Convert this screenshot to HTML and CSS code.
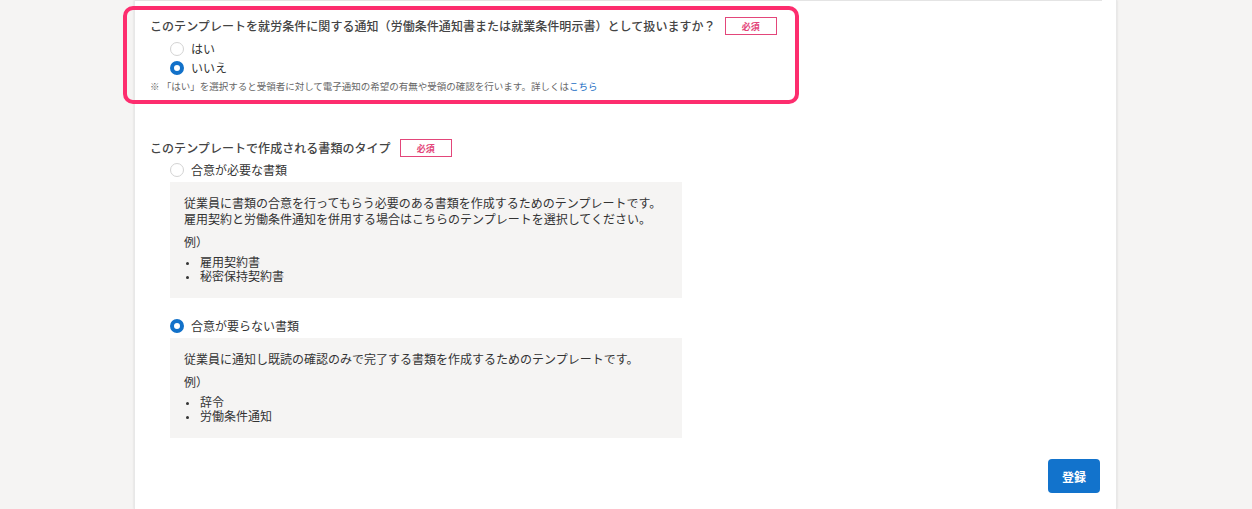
FILE: index.html
```html
<!DOCTYPE html>
<html lang="ja">
<head>
<meta charset="utf-8">
<link rel="stylesheet" href="styles.css">
</head>
<body>
<div class="page">
  <div class="card">
    <div class="topline"></div>
    <section class="field field-first">
      <div class="question">
        <span class="q-text">このテンプレートを就労条件に関する通知（労働条件通知書または就業条件明示書）として扱いますか？</span>
        <span class="badge">必須</span>
      </div>
      <div class="options">
        <label class="radio-row"><span class="radio"></span><span class="radio-label">はい</span></label>
        <label class="radio-row"><span class="radio checked"></span><span class="radio-label">いいえ</span></label>
      </div>
      <p class="note">※ 「はい」を選択すると受領者に対して電子通知の希望の有無や受領の確認を行います。詳しくは<a class="link">こちら</a></p>
      <div class="highlight"></div>
    </section>

    <section class="field field-second">
      <div class="question">
        <span class="q-text">このテンプレートで作成される書類のタイプ</span>
        <span class="badge">必須</span>
      </div>
      <div class="choice">
        <label class="radio-row"><span class="radio"></span><span class="radio-label">合意が必要な書類</span></label>
        <div class="desc">
          <p class="desc-text">従業員に書類の合意を行ってもらう必要のある書類を作成するためのテンプレートです。<br>雇用契約と労働条件通知を併用する場合はこちらのテンプレートを選択してください。</p>
          <p class="desc-ex">例）</p>
          <ul class="desc-list">
            <li>雇用契約書</li>
            <li>秘密保持契約書</li>
          </ul>
        </div>
      </div>
      <div class="choice choice-second">
        <label class="radio-row"><span class="radio checked"></span><span class="radio-label">合意が要らない書類</span></label>
        <div class="desc">
          <p class="desc-text">従業員に通知し既読の確認のみで完了する書類を作成するためのテンプレートです。</p>
          <p class="desc-ex">例）</p>
          <ul class="desc-list">
            <li>辞令</li>
            <li>労働条件通知</li>
          </ul>
        </div>
      </div>
    </section>

    <div class="actions">
      <button class="btn-primary">登録</button>
    </div>
  </div>
</div>
</body>
</html>
```

FILE: styles.css
```css
* { box-sizing: border-box; }
html, body { margin: 0; padding: 0; }
body {
  background: #f5f4f3;
  font-family: "Noto Sans CJK JP", "Noto Sans", sans-serif;
  color: #333;
  width: 1252px;
  height: 509px;
  overflow: hidden;
}
.page {
  padding-left: 134px;
  height: 509px;
}
.card {
  width: 983px;
  height: 509px;
  background: #fff;
  box-shadow: 0 0 2px rgba(0,0,0,0.12);
  border-left: 1px solid #e8e8e8;
  border-right: 1px solid #e8e8e8;
}
.topline {
  height: 1px;
  margin-right: 14px;
  background: #e4e4e4;
}
.field {
  position: relative;
  padding-left: 15px;
}
.field-first { padding-top: 16px; }
.field-second { padding-top: 46px; }
.question {
  display: flex;
  align-items: center;
  height: 18px;
}
.q-text {
  font-size: 12px;
  line-height: 18px;
  font-weight: 500;
  color: #444;
  letter-spacing: 0.05px;
}
.badge {
  margin-left: 9px;
  width: 52px;
  height: 18px;
  border: 1px solid #e3467a;
  color: #e3467a;
  font-size: 9px;
  font-weight: 700;
  display: flex;
  align-items: center;
  justify-content: center;
}
.options { margin-top: 4px; }
.radio-row {
  display: flex;
  align-items: center;
  height: 19px;
  padding-left: 20px;
}
.radio {
  width: 14px;
  height: 14px;
  border-radius: 50%;
  border: 1px solid #d3d3d3;
  background: #fff;
  flex: none;
}
.radio.checked {
  border: 4px solid #1271c9;
}
.radio-label {
  margin-left: 7px;
  font-size: 12px;
  color: #333;
  line-height: 19px;
}
.note {
  margin: 2px 0 0;
  font-size: 9.5px;
  line-height: 14px;
  color: #666;
}
.link { color: #1a6ec4; }
.highlight {
  position: absolute;
  left: -12px;
  top: 5px;
  width: 676px;
  height: 98px;
  border: 4px solid #fd2d6e;
  border-radius: 10px;
  pointer-events: none;
}
.choice .radio-row { margin-top: 3px; }
.choice-second { margin-top: 18px; }
.desc {
  margin: 3px 0 0 20px;
  width: 512px;
  background: #f5f4f3;
  padding: 13px 14px 14px;
}
.desc-text {
  margin: 0;
  font-size: 12px;
  line-height: 16px;
  color: #333;
}
.desc-ex {
  margin: 7px 0 0;
  font-size: 12px;
  line-height: 16px;
  color: #333;
}
.desc-list {
  margin: 7px 0 0;
  padding: 0;
  list-style: none;
}
.desc-list li {
  position: relative;
  font-family: "Liberation Sans", "Noto Sans CJK JP", sans-serif;
  font-size: 12px;
  line-height: 13.5px;
  padding-left: 16px;
  color: #333;
}
.desc-list li::before {
  content: "";
  position: absolute;
  left: 2px;
  top: 5px;
  width: 3px;
  height: 3px;
  border-radius: 50%;
  background: #333;
}
.actions {
  display: flex;
  justify-content: flex-end;
  padding-right: 16px;
  margin-top: 21px;
}
.btn-primary {
  width: 52px;
  height: 34px;
  border: none;
  border-radius: 4px;
  background: #1273cc;
  color: #fff;
  font-family: "Noto Sans CJK JP", sans-serif;
  font-size: 12px;
  font-weight: 700;
  padding: 0;
}
```
